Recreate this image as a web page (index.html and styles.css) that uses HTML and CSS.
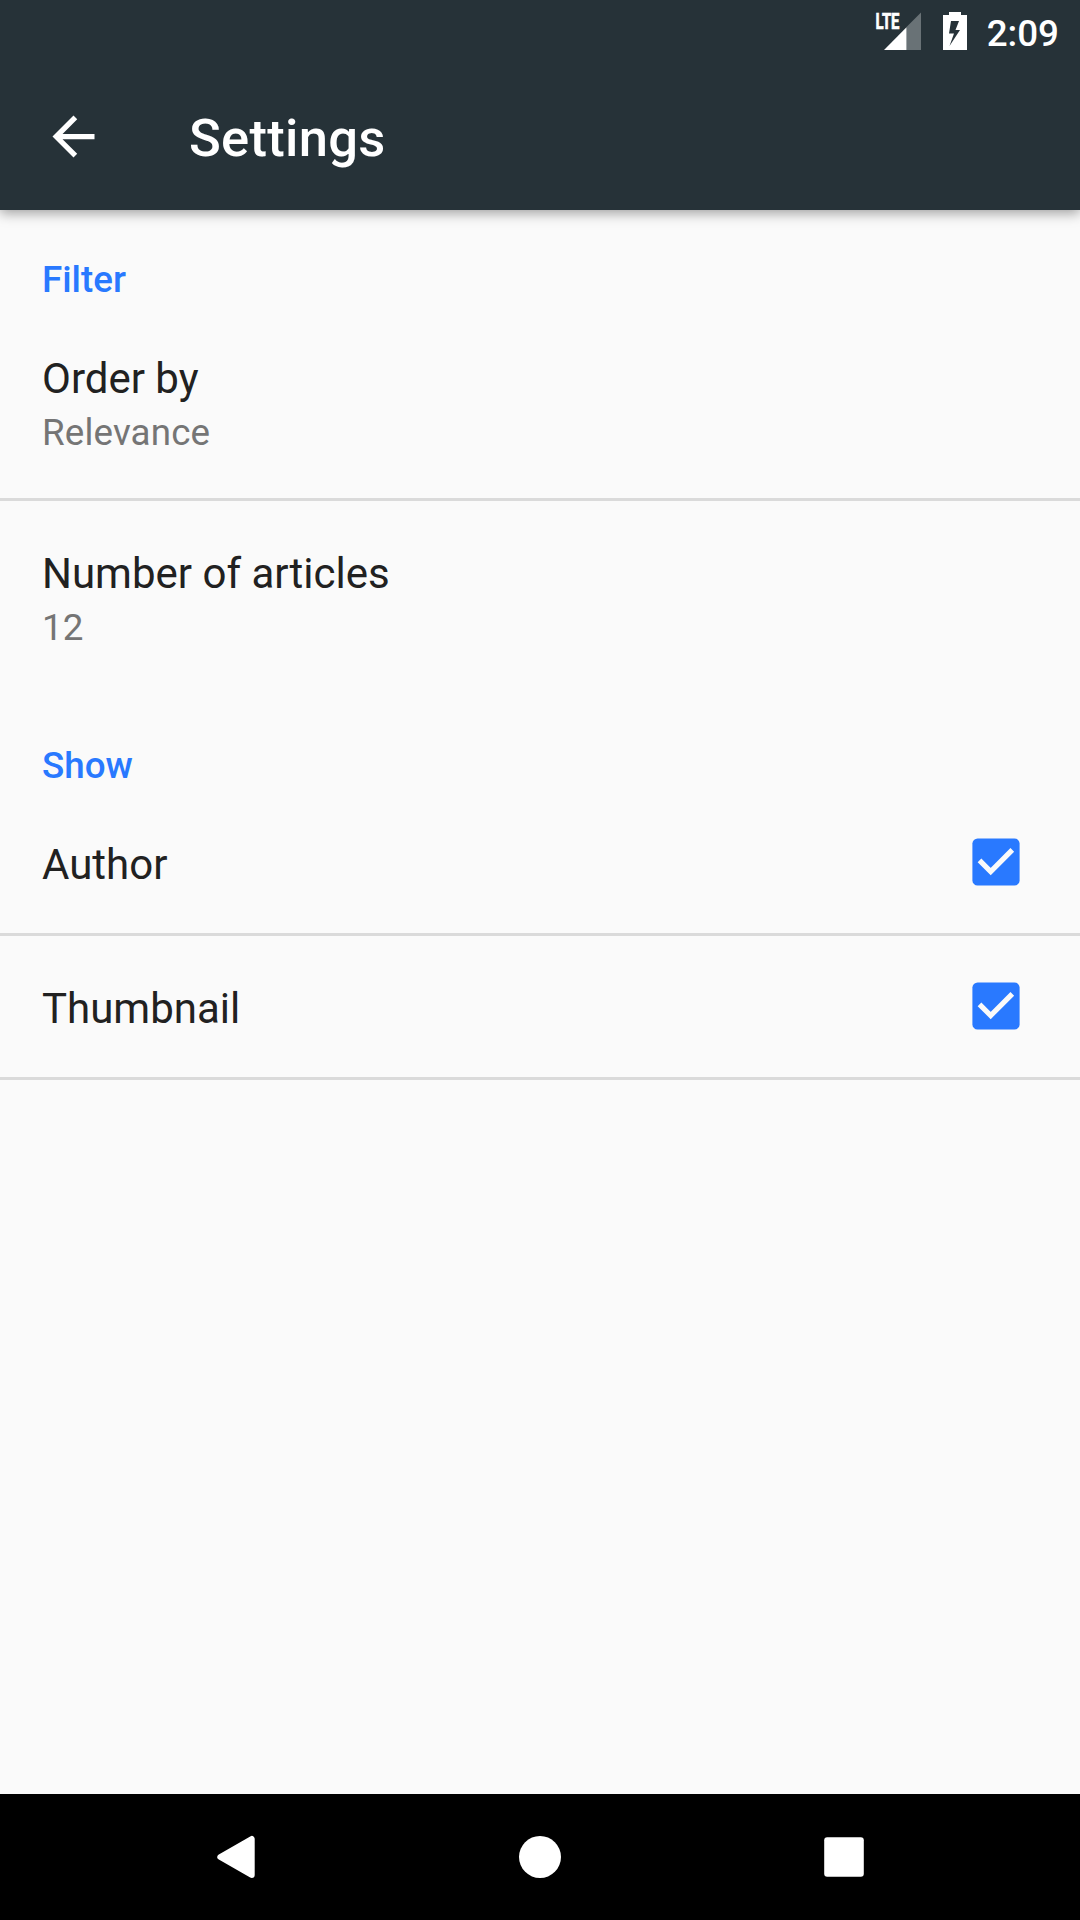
FILE: index.html
```html
<!DOCTYPE html>
<html lang="en">
<head>
<meta charset="utf-8">
<title>Settings</title>
<link rel="stylesheet" href="styles.css">
</head>
<body>
<div class="screen">
  <header class="header">
    <div class="status-bar">
      <svg class="signal" width="48" height="63" viewBox="0 0 48 63">
        <path fill="#697276" d="M33.500 27 48 12.600V50H33.500z"/>
        <path fill="#fff" d="M11 50 33.500 27.300V50z"/>
        <text class="lte" x="2.500" y="29" textLength="24" lengthAdjust="spacingAndGlyphs">LTE</text>
      </svg>
      <svg class="battery" width="24" height="63" viewBox="0 0 24 63">
        <path fill="#fff" fill-rule="evenodd" d="M6 12h12v3h6v35H0V15h6zM8 21 6 33.500h5L6.500 46 17 30h-4.500L16 21z"/>
      </svg>
      <span class="clock">2:09</span>
    </div>
    <div class="toolbar">
      <svg class="back" width="63" height="63" viewBox="0 0 24 24">
        <path fill="#fff" d="M20 11H7.830l5.590-5.590L12 4l-8 8 8 8 1.410-1.410L7.830 13H20z"/>
      </svg>
      <h1 class="title">Settings</h1>
    </div>
  </header>
  <main class="content">
    <section class="group">
      <h2 class="category">Filter</h2>
      <div class="row tall">
        <div class="label">Order by</div>
        <div class="summary">Relevance</div>
      </div>
      <div class="row tall last">
        <div class="label">Number of articles</div>
        <div class="summary">12</div>
      </div>
    </section>
    <section class="group">
      <h2 class="category">Show</h2>
      <div class="row toggle">
        <div class="label">Author</div>
        <svg class="check" width="48" height="48" viewBox="0 0 48 48">
          <rect x=".4" y=".4" width="47.200" height="47.200" rx="5.200" fill="#2979ff"/>
          <path d="M7.500 22.300 18.700 33.500 40.300 11.900" fill="none" stroke="#fafafa" stroke-width="5.200"/>
        </svg>
      </div>
      <div class="row toggle">
        <div class="label">Thumbnail</div>
        <svg class="check" width="48" height="48" viewBox="0 0 48 48">
          <rect x=".4" y=".4" width="47.200" height="47.200" rx="5.200" fill="#2979ff"/>
          <path d="M7.500 22.300 18.700 33.500 40.300 11.900" fill="none" stroke="#fafafa" stroke-width="5.200"/>
        </svg>
      </div>
    </section>
  </main>
  <nav class="nav-bar">
    <svg width="64" height="64" viewBox="0 0 64 64">
      <path fill="#fff" stroke="#fff" stroke-width="6" stroke-linejoin="round" d="M16.300 32 47.700 14V50z"/>
    </svg>
    <svg width="64" height="64" viewBox="0 0 64 64"><circle cx="32" cy="32" r="21" fill="#fff"/></svg>
    <svg width="64" height="64" viewBox="0 0 64 64"><rect x="12.200" y="12.200" width="39.600" height="39.600" rx="3" fill="#fff"/></svg>
  </nav>
</div>
</body>
</html>
```
FILE: styles.css
```css
* { box-sizing: border-box; }
body {
  margin: 0;
  font-family: Roboto, "Liberation Sans", sans-serif;
  color: #212121;
}
svg { display: block; flex: none; }
.screen {
  display: flex;
  flex-direction: column;
  width: 1080px;
  height: 1920px;
  overflow: hidden;
  background: #fafafa;
}
.header {
  height: 210px;
  background: #263238;
  color: #fff;
  box-shadow: 0 3px 12px rgba(0, 0, 0, .38);
}
.status-bar {
  display: flex;
  justify-content: flex-end;
  height: 63px;
  padding-right: 21px;
}
.lte {
  font: 700 22px Roboto, sans-serif;
  fill: #fff;
  stroke: #fff;
  stroke-width: .7px;
}
.battery { margin-left: 22px; }
.clock {
  width: 73px;
  margin-left: 19px;
  font-size: 36.75px;
  font-weight: 500;
  line-height: 67px;
  text-align: right;
}
.toolbar {
  display: flex;
  align-items: center;
  height: 147px;
  padding-left: 42px;
}
.title {
  margin: 2px 0 0 84px;
  font-size: 52.5px;
  font-weight: 500;
  line-height: 62px;
  letter-spacing: .3px;
}
.category {
  height: 96px;
  margin: 0;
  padding: 48px 42px 0;
  font-size: 36.75px;
  font-weight: 500;
  line-height: 43px;
  color: #2979ff;
}
.row { padding: 48px 42px 0; border-bottom: 3px solid #dadada; }
.tall { height: 195px; }
.last { border-color: transparent; }
.label { font-size: 42px; line-height: 49px; }
.summary {
  margin-top: 8px;
  font-size: 36.75px;
  line-height: 43px;
  letter-spacing: .15px;
  color: #757575;
}
.toggle {
  display: flex;
  justify-content: space-between;
  height: 144px;
  padding-right: 60px;
}
.check { margin-top: -2px; }
.nav-bar {
  display: flex;
  justify-content: center;
  align-items: center;
  gap: 240px;
  height: 126px;
  margin-top: auto;
  background: #000;
}
```
